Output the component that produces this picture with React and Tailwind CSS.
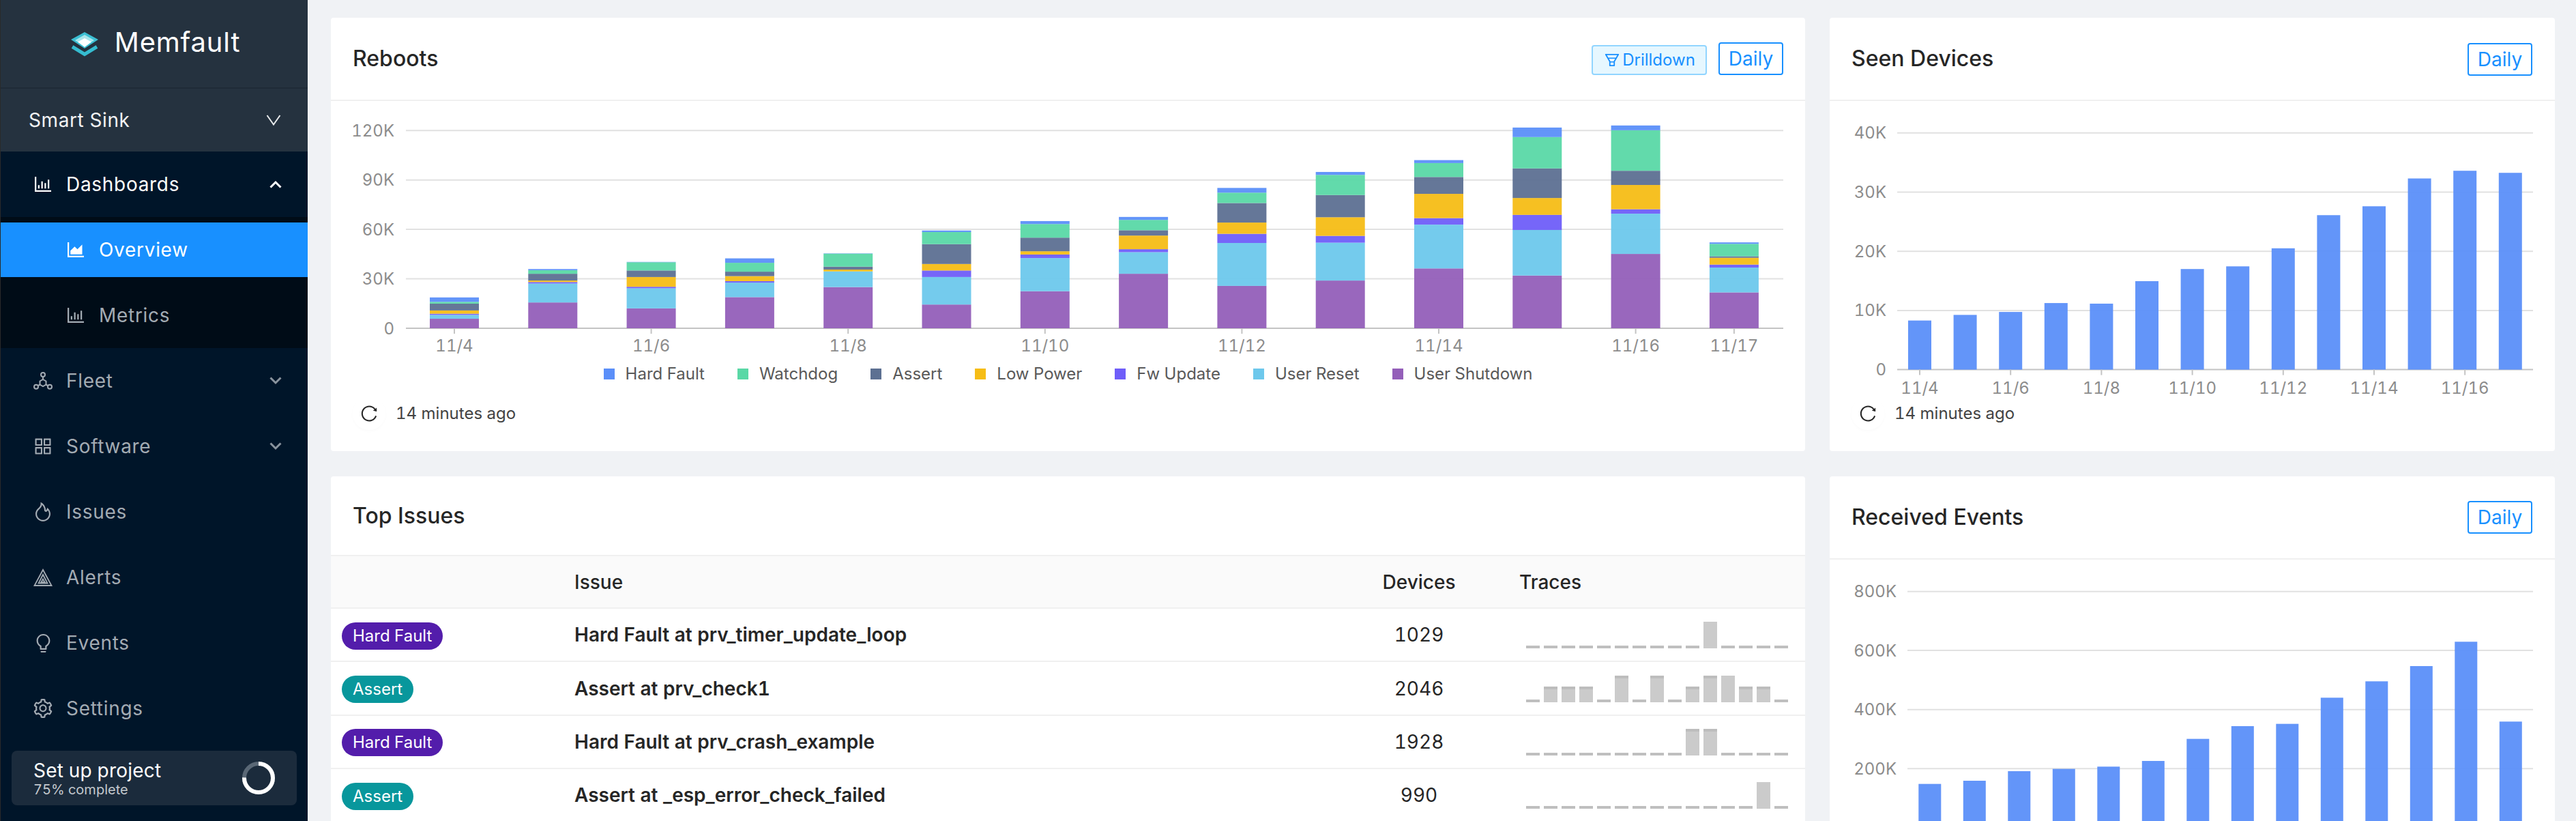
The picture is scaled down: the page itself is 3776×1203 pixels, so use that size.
import {
  AiOutlineBarChart,
  AiOutlineAreaChart,
  AiOutlineAppstore,
  AiOutlineFire,
  AiOutlineBulb,
  AiOutlineSetting,
  AiOutlineFunnelPlot,
  AiOutlineReload,
} from "react-icons/ai";

const seriesColors = ["#945FB9", "#6DC8EC", "#6F5EF9", "#F6BD16", "#5D7092", "#5AD8A6", "#5B8FF9"];

const legend = [
  ["Hard Fault", "bg-[#5B8FF9]"],
  ["Watchdog", "bg-[#5AD8A6]"],
  ["Assert", "bg-[#5D7092]"],
  ["Low Power", "bg-[#F6BD16]"],
  ["Fw Update", "bg-[#6F5EF9]"],
  ["User Reset", "bg-[#6DC8EC]"],
  ["User Shutdown", "bg-[#945FB9]"],
];

// top edge of every stacked segment, bottom series first
const rebootTops = [
  [1077, 1064, 1060, 1049, 1026, 1020, 1005],
  [1022, 958, 953, 948, 925, 913, 909],
  [1042, 974, 969, 936, 914, 886, 885],
  [1004, 955, 950, 933, 918, 888, 873],
  [970, 917, 917, 911, 901, 857, 856],
  [1029, 936, 914, 892, 825, 784, 779],
  [984, 872, 860, 849, 803, 757, 747],
  [925, 852, 842, 796, 778, 743, 733],
  [966, 821, 790, 752, 686, 651, 635],
  [948, 820, 797, 734, 659, 591, 581],
  [907, 759, 737, 655, 598, 551, 541],
  [931, 777, 726, 669, 569, 463, 431],
  [858, 722, 707, 625, 577, 440, 424],
  [988, 904, 894, 871, 866, 824, 819],
].map((bar) => bar.map((v) => v / 2.306));

const rebootTicks = { 0: "11/4", 2: "11/6", 4: "11/8", 6: "11/10", 8: "11/12", 10: "11/14", 12: "11/16", 13: "11/17" };
const deviceTicks = { 0: "11/4", 2: "11/6", 4: "11/8", 6: "11/10", 8: "11/12", 10: "11/14", 12: "11/16" };

const deviceTops = [1083, 1064, 1054, 1024, 1026, 950, 909, 900, 839, 727, 697, 603, 577, 584].map((v) => v / 2.306);
const eventTops = [1406, 1392, 1350, 1340, 1330, 1305, 1208, 1152, 1142, 1027, 955, 888, 781, 1132].map((v) => 680 + v / 3);

const S = 4;
const M = 23;
const T = 39;
const issues = [
  { type: "Hard Fault", title: "Hard Fault at prv_timer_update_loop", devices: 1029, bars: [S, S, S, S, S, S, S, S, S, S, T, S, S, S, S], caps: [] },
  { type: "Assert", title: "Assert at prv_check1", devices: 2046, bars: [S, M, M, M, S, T, S, T, S, M, T, T, M, M, S], caps: [1, 2, 3, 5, 7, 9, 10, 12, 13] },
  { type: "Hard Fault", title: "Hard Fault at prv_crash_example", devices: 1928, bars: [S, S, S, S, S, S, S, S, S, T, T, S, S, S, S], caps: [9, 10] },
  { type: "Assert", title: "Assert at _esp_error_check_failed", devices: 990, bars: [S, S, S, S, S, S, S, S, S, S, S, S, S, T, S], caps: [] },
];

function Chevron({ up, big }) {
  if (big) {
    return (
      <svg width="22" height="18" viewBox="0 0 22 18" fill="none" stroke="#e8eaec" strokeWidth="2">
        <path d="M1.5 2 11 15.5 20.5 2" />
      </svg>
    );
  }
  return (
    <svg width="18" height="12" viewBox="0 0 18 12" fill="none" stroke={up ? "#ffffff" : "#8a949e"} strokeWidth="3">
      <path d={up ? "M1.5 10.5 9 3l7.5 7.5" : "M1.5 1.5 9 9l7.5-7.5"} />
    </svg>
  );
}

function FleetIcon() {
  return (
    <svg width="28" height="28" viewBox="0 0 28 28" fill="none" stroke="currentColor" strokeWidth="2" className="shrink-0">
      <circle cx="14" cy="5" r="3" />
      <circle cx="4" cy="22.7" r="3" />
      <circle cx="24" cy="22.7" r="3" />
      <path d="M14 8v4M7 21l3-1.5M21 21l-3-1.5" />
      <path d="M14 12l4.5 2.5v5L14 22l-4.5-2.5v-5z" />
    </svg>
  );
}

function AlertsIcon() {
  return (
    <svg width="28" height="28" viewBox="0 0 28 28" fill="none" stroke="currentColor" strokeWidth="1.8" className="shrink-0">
      <path d="M14 3 1.5 26h25z" />
      <path d="M14 10 7.5 22.5h13z" />
      <path d="M14 16.5l-2.6 4.6h5.2z" />
    </svg>
  );
}

function Logo() {
  return (
    <svg width="40" height="36" viewBox="0 0 40 36" className="mt-[5px] shrink-0">
      <path d="M20 0 40 11 20 24 0 11z" fill="#3cbfd3" />
      <path d="M20 4 34 12 20 21 6 12z" fill="#a9e6ec" />
      <path d="M20 9 30 14.5 20 22 10 14.5z" fill="#ffffff" />
      <path d="M2 21.5 20 32.5 38 21.5" fill="none" stroke="#35bcd0" strokeWidth="5" />
    </svg>
  );
}

function NavIcon({ children }) {
  return <span className="flex w-7 shrink-0 justify-center">{children}</span>;
}

function NavItem({ icon, label, chevron }) {
  return (
    <div className="flex h-[96px] items-center pl-12 pr-[38px] text-[#a3abb3]">
      <NavIcon>{icon}</NavIcon>
      <span className="ml-5 flex-1 text-[28px] tracking-[0.7px]">{label}</span>
      {chevron && <Chevron />}
    </div>
  );
}

function Sidebar() {
  return (
    <aside className="flex h-[1203px] w-[451px] shrink-0 flex-col border-l border-[#2a2a2a] bg-[#001529] text-white">
      <div className="flex h-[130px] items-center justify-center gap-6 border-b-2 border-[#1f2b37] bg-[#25323f] pb-1 pl-[4px]">
        <Logo />
        <span className="text-[40px] tracking-[0.8px] text-white">Memfault</span>
      </div>
      <div className="flex h-[92px] items-center justify-between bg-[#25323f] pl-[41px] pr-[39px]">
        <span className="text-[28px] tracking-[0.6px] text-[#f2f3f4]">Smart Sink</span>
        <Chevron big />
      </div>
      <div className="flex h-[96px] items-center pl-12 pr-[38px]">
        <NavIcon><AiOutlineBarChart size={32} className="shrink-0" /></NavIcon>
        <span className="ml-5 flex-1 text-[28px] tracking-[0.7px]">Dashboards</span>
        <Chevron up />
      </div>
      <div className="bg-[#000c17] py-2">
        <div className="flex h-20 items-center bg-[#1890ff] pl-24">
          <NavIcon><AiOutlineAreaChart size={32} className="shrink-0" /></NavIcon>
          <span className="ml-5 text-[28px] tracking-[0.7px]">Overview</span>
        </div>
        <div className="mt-4 flex h-20 items-center pl-24 text-[#a3abb3]">
          <NavIcon><AiOutlineBarChart size={32} className="shrink-0" /></NavIcon>
          <span className="ml-5 text-[28px] tracking-[0.7px]">Metrics</span>
        </div>
      </div>
      <NavItem icon={<FleetIcon />} label="Fleet" chevron />
      <NavItem icon={<AiOutlineAppstore size={32} className="shrink-0" />} label="Software" chevron />
      <NavItem icon={<AiOutlineFire size={32} className="shrink-0" />} label="Issues" />
      <NavItem icon={<AlertsIcon />} label="Alerts" />
      <NavItem icon={<AiOutlineBulb size={31} className="shrink-0" />} label="Events" />
      <NavItem icon={<AiOutlineSetting size={32} className="shrink-0" />} label="Settings" />
      <div className="mx-4 mt-[14px] flex h-20 items-center justify-between rounded-lg bg-[#1b2b3c] pl-8 pr-8">
        <div className="flex flex-col">
          <span className="pt-[2px] text-[28px] leading-[32px] tracking-[0.2px]">Set up project</span>
          <span className="text-[20px] leading-[24px] text-[#c3c8cd]">75% complete</span>
        </div>
        <svg width="48" height="48" viewBox="0 0 48 48" fill="none" strokeWidth="6">
          <circle cx="24" cy="24" r="21" stroke="#5a6876" />
          <circle cx="24" cy="24" r="21" stroke="#ffffff" strokeDasharray="99 132" transform="rotate(-90 24 24)" />
        </svg>
      </div>
    </aside>
  );
}

function Grid({ lines, x1, x2, base, labelX }) {
  return (
    <>
      {lines.map(([y, label]) => (
        <g key={label}>
          <line x1={x1} x2={x2} y1={y} y2={y} stroke={y === base ? "#c4c4c4" : "#e1e1e1"} strokeWidth="2" />
          <text x={labelX} y={y + 8.5} textAnchor="end" fontSize="24" fill="#8c8c8c">{label}</text>
        </g>
      ))}
    </>
  );
}

function XTicks({ ticks, start, step, width, base, labelY }) {
  return (
    <>
      {Object.entries(ticks).map(([i, label]) => {
        const cx = start + i * step + width / 2;
        return (
          <g key={label}>
            <line x1={cx} x2={cx} y1={base} y2={base + 8} stroke="#c4c4c4" strokeWidth="2" />
            <text x={cx} y={labelY} textAnchor="middle" fontSize="24" fill="#8c8c8c">{label}</text>
          </g>
        );
      })}
    </>
  );
}

function RebootsChart() {
  const base = 481;
  return (
    <svg width="2161" height="380" viewBox="485 148 2161 380" className="block">
      <Grid lines={[[191.2, "120K"], [263.7, "90K"], [336, "60K"], [408.5, "30K"], [base, "0"]]} x1={595} x2={2614} base={base} labelX={578} />
      {rebootTops.map((tops, i) => {
        const x = 630 + i * 144.3;
        return tops.map((top, s) => (
          <rect key={s} x={x} y={top} width="72" height={(s === 0 ? base : tops[s - 1]) - top} fill={seriesColors[s]} fillOpacity="0.95" />
        ));
      })}
      <XTicks ticks={rebootTicks} start={630} step={144.3} width={72} base={base} labelY={515} />
    </svg>
  );
}

function BarChart({ viewBox, height, lines, x1, base, labelX, tops, start, step, width, ticks, labelY }) {
  return (
    <svg width="1063" height={height} viewBox={viewBox} className="block">
      <Grid lines={lines} x1={x1} x2={3713} base={base} labelX={labelX} />
      {tops.map((top, i) => (
        <rect key={i} x={start + i * step} y={top} width={width} height={base - top} fill="#5B8FF9" fillOpacity="0.95" />
      ))}
      {ticks && <XTicks ticks={ticks} start={start} step={step} width={width} base={base} labelY={labelY} />}
    </svg>
  );
}

function DailyButton() {
  return (
    <button className="flex h-12 w-[95px] items-center justify-center rounded border-2 border-[#1890ff] text-[28px] text-[#1890ff]">
      Daily
    </button>
  );
}

function Updated({ className }) {
  return (
    <div className={`flex items-center text-[24px] text-[#434343] ${className}`}>
      <span className="flex h-12 w-12 items-center justify-center rounded-full text-[#262626] shadow-[0_2px_4px_rgba(0,0,0,0.02)]">
        <AiOutlineReload size={28} />
      </span>
      <span>14 minutes ago</span>
    </div>
  );
}

function Sparkline({ bars, caps }) {
  return (
    <svg width="386" height="40" viewBox="0 0 386 40" className="ml-[19px] block">
      {bars.map((h, i) => (
        <g key={i}>
          <rect x={i * 26} y={40 - h} width="20" height={h} fill={h === S ? "#bfbfbf" : "#cbcbcb"} />
          {caps.includes(i) && <rect x={i * 26} y={40 - h} width="20" height="4" fill="#bdbdbd" />}
        </g>
      ))}
    </svg>
  );
}

function IssueRow({ issue }) {
  const pill = issue.type === "Assert" ? "bg-[#08979c]" : "bg-[#531dab]";
  return (
    <div className="grid h-[78.4px] grid-cols-[357px_1100px_276px_428px] items-center border-b-2 border-[#f0f0f0] text-[28px] text-[#262626]">
      <div className="pl-4">
        <span className={`mt-[3px] inline-flex h-10 items-center rounded-full px-4 text-[24px] text-white ${pill}`}>{issue.type}</span>
      </div>
      <div className="font-semibold">{issue.title}</div>
      <div className="text-center">{issue.devices}</div>
      <Sparkline bars={issue.bars} caps={issue.caps} />
    </div>
  );
}

export default function App() {
  return (
    <div className="flex h-[1203px] w-[3776px] overflow-hidden bg-[#f0f2f5] font-[Inter,sans-serif] tabular-nums">
      <Sidebar />
      <main className="grid h-[1203px] grid-cols-[2161px_1063px] grid-rows-[635px_600px] gap-x-9 gap-y-[37px] pl-[34px] pt-[26px]">
        <section className="rounded bg-white">
          <div className="flex h-[122px] items-center justify-between border-b-2 border-[#f0f0f0] px-8">
            <h2 className="text-[32px] font-medium text-[#262626]">Reboots</h2>
            <div className="flex items-end gap-[17px]">
              <button className="flex h-11 w-[169px] items-center justify-center gap-[2px] rounded border-2 border-[#91d5ff] bg-[#e6f7ff] text-[24px] text-[#1890ff]">
                <AiOutlineFunnelPlot size={26} />
                Drilldown
              </button>
              <DailyButton />
            </div>
          </div>
          <RebootsChart />
          <div className="flex h-10 items-center justify-center gap-12 text-[24px] text-[#595959]">
            {legend.map(([label, swatch]) => (
              <div key={label} className="flex items-center gap-4">
                <span className={`h-4 w-4 ${swatch}`} />
                {label}
              </div>
            ))}
          </div>
          <Updated className="mt-[14px] gap-[15px] pl-8" />
        </section>

        <section className="rounded bg-white">
          <div className="flex h-[122px] items-center justify-between border-b-2 border-[#f0f0f0] pl-8 pr-[33px]">
            <h2 className="text-[32px] font-medium text-[#262626]">Seen Devices</h2>
            <div className="pt-[2px]">
              <DailyButton />
            </div>
          </div>
          <BarChart
            viewBox="2682 148 1063 434"
            height={434}
            lines={[[194.7, "40K"], [281.4, "30K"], [368.2, "20K"], [454.9, "10K"], [541.6, "0"]]}
            x1={2781}
            base={541.6}
            labelX={2765}
            tops={deviceTops}
            start={2797}
            step={66.6}
            width={34}
            ticks={deviceTicks}
            labelY={577}
          />
          <Updated className="gap-[15px] pl-8" />
        </section>

        <section className="overflow-hidden rounded-t bg-white">
          <div className="flex h-[117px] items-center border-b-2 border-[#f0f0f0] px-8">
            <h2 className="text-[32px] font-medium text-[#262626]">Top Issues</h2>
          </div>
          <div className="grid h-[77px] grid-cols-[357px_1100px_276px_428px] items-center border-b-2 border-[#f0f0f0] bg-[#fafafa] text-[28px] font-medium text-[#262626]">
            <div />
            <div>Issue</div>
            <div className="text-center">Devices</div>
            <div className="pl-[9px]">Traces</div>
          </div>
          {issues.map((issue) => (
            <IssueRow key={issue.title} issue={issue} />
          ))}
        </section>

        <section className="overflow-hidden rounded-t bg-white">
          <div className="flex h-[122px] items-center justify-between border-b-2 border-[#f0f0f0] pl-8 pr-[33px]">
            <h2 className="text-[32px] font-medium text-[#262626]">Received Events</h2>
            <DailyButton />
          </div>
          <BarChart
            viewBox="2682 820 1063 383"
            height={383}
            lines={[[866.8, "800K"], [953, "600K"], [1039.7, "400K"], [1126.3, "200K"]]}
            x1={2796}
            base={1213}
            labelX={2780}
            tops={eventTops}
            start={2812.3}
            step={65.5}
            width={33}
          />
        </section>
      </main>
    </div>
  );
}
